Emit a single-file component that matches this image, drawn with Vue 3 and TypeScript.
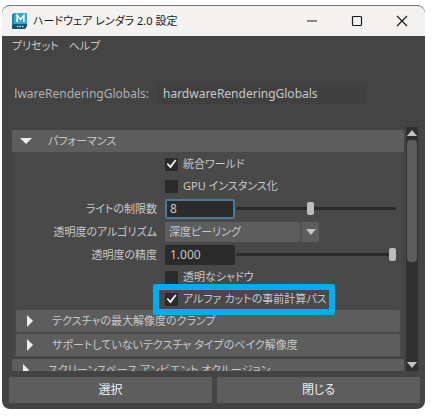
<script setup lang="ts">
import { ref } from 'vue'

const nodeName = ref('hardwareRenderingGlobals')
const open = ref(true)
const consolidateWorld = ref(true)
const gpuInstancing = ref(false)
const lightLimit = ref(8)
const algorithm = ref('深度ピーリング')
const quality = ref('1.000')
const transparentShadow = ref(false)
const alphaCutPrepass = ref(true)

const subSections: string[] = [
  'テクスチャの最大解像度のクランプ',
  'サポートしていないテクスチャ タイプのベイク解像度',
]
</script>

<template>
  <main class="desktop">
    <section class="window">
      <header class="titlebar">
        <svg class="logo" viewBox="0 0 15 16" aria-hidden="true">
          <path d="M2 0h13v13l-2 3H0V2z" fill="#1b7f9f" />
          <path d="M2 0h13v11H2z" fill="#35a9cb" />
          <path d="M0 2l2-2v11l-2 1z" fill="#1f89aa" />
          <path d="M0 12l2-1h13v2l-2 3H0z" fill="#14566f" />
          <path d="M5.2 9V2.5L8.5 6.500l3.300-4V9" fill="none" stroke="#fff" stroke-width="1.700" />
          <path d="M5 13.500h1.500M7.500 13.500H9M10 13.500h1.500" stroke="#b9dbe5" stroke-width="1.300" />
        </svg>
        <h1 class="title">ハードウェア レンダラ 2.0 設定</h1>
        <div class="controls">
          <button class="control" type="button" aria-label="最小化">
            <svg viewBox="0 0 12 12"><path d="M1 6h10" /></svg>
          </button>
          <button class="control" type="button" aria-label="最大化">
            <svg viewBox="0 0 12 12"><rect x="1.500" y="1.500" width="9" height="9" rx="1" /></svg>
          </button>
          <button class="control" type="button" aria-label="ウィンドウを閉じる">
            <svg viewBox="0 0 12 12"><path d="M1 1l10 10M11 1L1 11" /></svg>
          </button>
        </div>
      </header>

      <nav class="menu">
        <button type="button">プリセット</button>
        <button type="button">ヘルプ</button>
      </nav>

      <div class="node">
        <label class="node-label" for="node-name"><span>hardwareRenderingGlobals:</span></label>
        <input id="node-name" v-model="nodeName" class="node-input" type="text" />
      </div>

      <div class="scroll">
        <div class="sections">
          <button class="section" type="button" :aria-expanded="open" @click="open = !open">
            <svg class="arrow" viewBox="0 0 12 12"><path d="M0 3h12L6 9z" /></svg>
            <span>パフォーマンス</span>
          </button>
          <div v-if="open" class="body">
            <div class="row">
              <label class="check"><input v-model="consolidateWorld" type="checkbox" /><span>統合ワールド</span></label>
            </div>
            <div class="row">
              <label class="check"><input v-model="gpuInstancing" type="checkbox" /><span>GPU インスタンス化</span></label>
            </div>
            <div class="row field-row">
              <label class="name" for="light-limit">ライトの制限数</label>
              <input id="light-limit" v-model="lightLimit" class="field active" type="text" />
              <input v-model.number="lightLimit" class="slider" type="range" min="1" max="16" aria-label="ライトの制限数" />
            </div>
            <div class="row field-row">
              <label class="name" for="algorithm">透明度のアルゴリズム</label>
              <div class="combo">
                <select id="algorithm" v-model="algorithm">
                  <option>深度ピーリング</option>
                </select>
                <span class="combo-button" aria-hidden="true">
                  <svg viewBox="0 0 10 6"><path d="M0 0h10L5 6z" /></svg>
                </span>
              </div>
            </div>
            <div class="row field-row">
              <label class="name" for="quality">透明度の精度</label>
              <input id="quality" v-model="quality" class="field" type="text" />
              <input v-model="quality" class="slider" type="range" min="0" max="1" step="0.001" aria-label="透明度の精度" />
            </div>
            <div class="row">
              <label class="check"><input v-model="transparentShadow" type="checkbox" /><span>透明なシャドウ</span></label>
            </div>
            <div class="row">
              <label class="check marked"><input v-model="alphaCutPrepass" type="checkbox" /><span>アルファ カットの事前計算パス</span></label>
            </div>
            <div class="subs">
              <button v-for="s in subSections" :key="s" class="section sub" type="button">
                <svg class="arrow" viewBox="0 0 12 12"><path d="M3 0v12l6-6z" /></svg>
                <span>{{ s }}</span>
              </button>
            </div>
          </div>
          <button class="section" type="button">
            <svg class="arrow" viewBox="0 0 12 12"><path d="M3 0v12l6-6z" /></svg>
            <span>スクリーンスペース アンビエント オクルージョン</span>
          </button>
        </div>
        <div class="scrollbar" aria-hidden="true">
          <svg viewBox="0 0 10 6"><path d="M0 6h10L5 0z" /></svg>
          <div class="rail"><div class="thumb"></div></div>
          <svg viewBox="0 0 10 6"><path d="M0 0h10L5 6z" /></svg>
        </div>
      </div>

      <footer class="footer">
        <button type="button">選択</button>
        <button type="button">閉じる</button>
      </footer>
    </section>
  </main>
</template>

<style>
body {
  margin: 0;
  background: #fff;
}
</style>

<style scoped>
* {
  box-sizing: border-box;
}

.desktop {
  display: flex;
  height: 100vh;
  padding: 5px 7px 7px 2px;
  font-family: 'Noto Sans', 'Noto Sans CJK JP', sans-serif;
  font-size: 11px;
  font-feature-settings: 'palt';
  line-height: 20px;
  color: #c8c8c8;
}

button,
input,
select {
  margin: 0;
  padding: 0;
  border: 0;
  border-radius: 0;
  outline: none;
  background: none;
  color: inherit;
  font: inherit;
  font-feature-settings: inherit;
}

.window {
  flex: 1;
  min-width: 0;
  display: flex;
  flex-direction: column;
  overflow: hidden;
  border: 1px solid #777;
  border-width: 1px 0 0;
  border-radius: 8px;
  background: #444;
}

.titlebar {
  display: flex;
  align-items: center;
  height: 30px;
  padding: 0 1px 0 10px;
  background: #f3f2f1;
  color: #1c1c1c;
}

.logo {
  width: 15px;
  height: 16px;
}

.title {
  margin: 0 0 0 6px;
  font-size: 11px;
  font-weight: 400;
  white-space: nowrap;
}

.controls {
  display: flex;
  margin-left: auto;
}

.control {
  display: grid;
  place-items: center;
  width: 45px;
  height: 30px;
}

.control svg {
  width: 12px;
  height: 12px;
  fill: none;
  stroke: #1c1c1c;
  stroke-width: 1.2;
}

.menu {
  display: flex;
  gap: 10px;
  padding: 0 10px;
}

.node {
  display: flex;
  align-items: center;
  gap: 8px;
  margin-top: 28px;
  padding-left: 13px;
  font-size: 12px;
}

.node-label {
  display: flex;
  justify-content: flex-end;
  width: 134px;
  overflow: hidden;
  color: #b0b0b0;
}

.node-input {
  width: 210px;
  height: 20px;
  padding: 0 6px;
  background: #404040;
}

.scroll {
  flex: 1;
  min-height: 0;
  display: flex;
  gap: 2px;
  margin: 23px 7px 0 10px;
  overflow: hidden;
}

.sections {
  flex: 1;
  min-width: 0;
  padding-top: 3px;
}

.section {
  display: flex;
  align-items: center;
  gap: 16px;
  width: 100%;
  height: 22px;
  padding: 0 8px;
  border-radius: 2px;
  background: #5d5d5d;
  text-align: left;
  white-space: nowrap;
}

.arrow {
  flex: none;
  width: 12px;
  height: 12px;
  fill: #eee;
}

.body {
  margin: 0 2px 2px;
  padding: 1px 0;
  background: #494949;
}

.row {
  display: flex;
  align-items: center;
  height: 22px;
  padding: 0 6px 0 151px;
}

.field-row {
  height: 23px;
  padding-left: 0;
}

.name {
  width: 143px;
  margin-right: 8px;
  text-align: right;
  white-space: nowrap;
}

.check {
  position: relative;
  display: flex;
  align-items: center;
  gap: 5px;
  white-space: nowrap;
}

.check input {
  appearance: none;
  width: 13px;
  height: 13px;
  background: #2b2b2b;
}

.check input:checked {
  display: grid;
  place-items: center;
}

.check input:checked::before {
  content: '';
  width: 10px;
  height: 10px;
  background: #eee;
  clip-path: polygon(0 50%, 14% 40%, 37% 66%, 86% 4%, 100% 14%, 40% 96%);
}

.marked::after {
  content: '';
  position: absolute;
  inset: -5px -8px -6px -12px;
  border: 6px solid #00aeef;
  border-radius: 2px;
  pointer-events: none;
}

.field {
  width: 70px;
  height: 20px;
  padding: 0 5px;
  border-radius: 2px;
  background: #2b2b2b;
  font-size: 12px;
}

.field.active {
  border: 2px solid #4f7893;
  padding: 0 3px;
}

.slider {
  appearance: none;
  flex: 1;
  min-width: 0;
  height: 20px;
  margin-left: 1px;
}

.slider::-webkit-slider-runnable-track {
  height: 3px;
  border-radius: 2px;
  background: #2b2b2b;
}

.slider::-webkit-slider-thumb {
  appearance: none;
  width: 7px;
  height: 13px;
  margin-top: -5px;
  border-radius: 2px;
  background: #bdbdbd;
}

.combo {
  display: grid;
  grid-template-columns: 135px 19px;
}

.combo select {
  appearance: none;
  grid-area: 1 / 1 / 2 / 3;
  height: 20px;
  padding: 0 22px 0 4px;
  border-radius: 2px;
  background: #5d5d5d;
}

.combo-button {
  grid-area: 1 / 2;
  display: grid;
  place-items: center;
  border-left: 2px solid #525252;
  pointer-events: none;
}

.combo-button svg,
.scrollbar svg {
  width: 10px;
  height: 6px;
  fill: #c4c4c4;
}

.subs {
  display: grid;
  gap: 2px;
  padding: 0 2px;
}

.scrollbar {
  display: flex;
  flex-direction: column;
  align-items: center;
  gap: 4px;
  width: 12px;
  padding: 3px 1px;
  background: #303030;
}

.scrollbar svg {
  flex: none;
}

.rail {
  flex: 1;
  width: 100%;
}

.thumb {
  height: 56%;
  border-radius: 4px;
  background: #5d5d5d;
}

.footer {
  display: grid;
  grid-template-columns: 1fr 1fr;
  gap: 5px;
  padding: 6px 5px 6px 7px;
}

.footer button {
  height: 26px;
  background: #5d5d5d;
  color: #eee;
  font-size: 12px;
}
</style>
